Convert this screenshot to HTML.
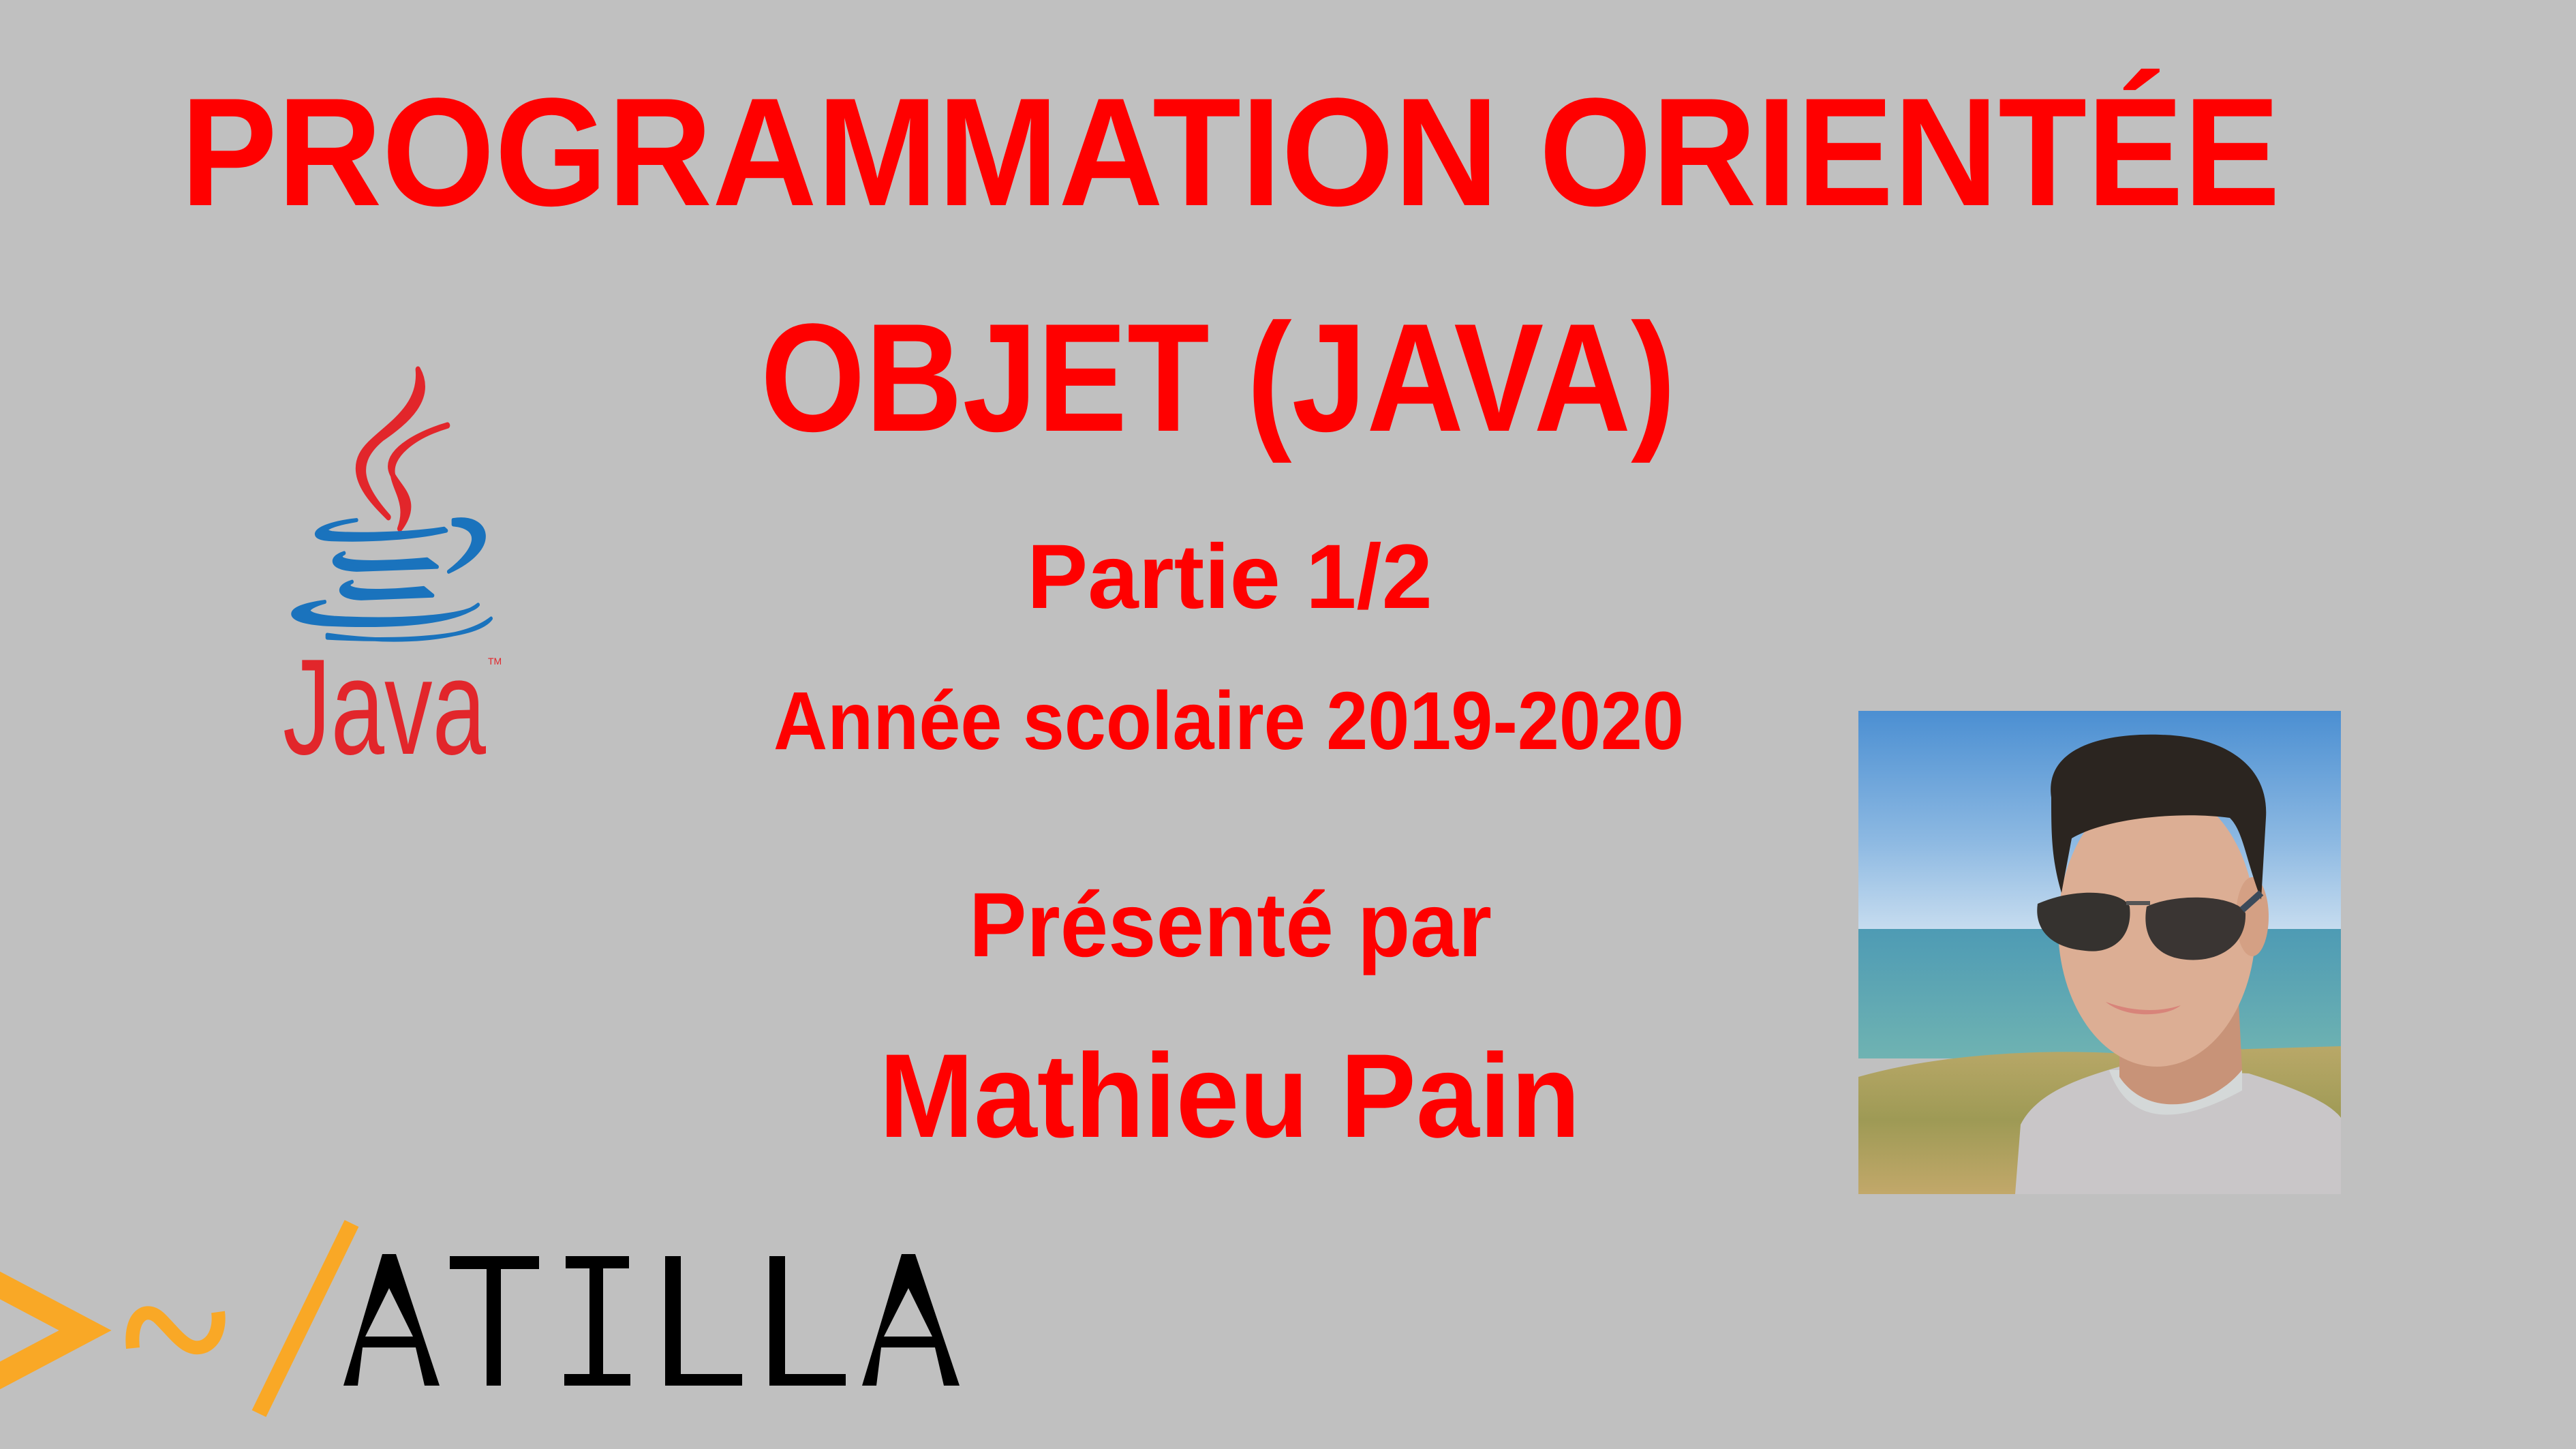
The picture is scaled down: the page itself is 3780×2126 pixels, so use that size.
<!DOCTYPE html>
<html><head><meta charset="utf-8"><style>
html,body{margin:0;padding:0;background:#c0c0c0;}
svg{display:block}
</style></head><body>
<svg width="3780" height="2126" viewBox="0 0 3780 2126" xmlns="http://www.w3.org/2000/svg">
<rect width="3780" height="2126" fill="#c0c0c0"/>
<g font-family="Liberation Sans, sans-serif" font-weight="bold" fill="#ff0000">
<text x="265" y="301" font-size="226" textLength="3081" lengthAdjust="spacingAndGlyphs">PROGRAMMATION ORIENTÉE</text>
<text x="1116" y="632" font-size="226" textLength="1343" lengthAdjust="spacingAndGlyphs">OBJET (JAVA)</text>
<text x="1507" y="892" font-size="134" textLength="595" lengthAdjust="spacingAndGlyphs">Partie 1/2</text>
<text x="1135" y="1099" font-size="121" textLength="1336" lengthAdjust="spacingAndGlyphs">Année scolaire 2019-2020</text>
<text x="1422" y="1403" font-size="134" textLength="767" lengthAdjust="spacingAndGlyphs">Présenté par</text>
<text x="1290" y="1668" font-size="175" textLength="1029" lengthAdjust="spacingAndGlyphs">Mathieu Pain</text>
</g>
<!-- Java logo -->
<g transform="translate(380,500) scale(0.3333,0.4209)">
<g fill="#e2262b" stroke="#e2262b" stroke-width="22" stroke-linejoin="round">
<path d="M700,100 C770,200 650,280 540,340 C420,420 440,500 570,615 C500,560 400,480 450,400 C500,320 720,260 700,100 Z"/>
<path d="M830,295 C720,320 560,380 580,450 C600,510 720,550 620,655 C660,570 600,520 590,470 C570,400 680,330 830,295 Z"/>
</g>
<g fill="#1a73bd" stroke="#1a73bd" stroke-width="14" stroke-linejoin="round">
<path d="M430,625 C250,640 190,690 330,692 C500,697 700,685 825,662 L815,655 C700,670 450,680 320,670 C260,660 320,640 430,625 Z"/>
<path d="M855,625 C1010,605 1070,720 835,805 C960,730 990,650 855,640 Z"/>
<path d="M375,740 C300,760 320,795 430,798 L785,788 L740,762 C600,772 420,778 370,762 C355,755 360,746 375,740 Z"/>
<path d="M410,840 C330,860 350,895 450,898 L765,888 L725,862 C600,872 450,878 405,862 C390,855 395,846 410,840 Z"/>
<path d="M290,910 C100,930 100,978 300,988 C600,998 860,985 965,920 C920,965 600,978 330,966 C180,956 200,930 290,910 Z"/>
<path d="M300,1025 C600,1058 900,1045 1022,968 C960,1035 650,1050 300,1035 Z"/>
</g>
</g>
<text x="415" y="1106" font-family="Liberation Sans, sans-serif" font-size="200" fill="#e2262b" textLength="298" lengthAdjust="spacingAndGlyphs">Java</text>
<text x="716" y="975" font-family="Liberation Sans, sans-serif" font-size="14" fill="#e2262b">TM</text>
<!-- Photo -->
<defs>
<linearGradient id="sky" x1="0" y1="0" x2="0" y2="1"><stop offset="0" stop-color="#4b8fd2"/><stop offset="0.6" stop-color="#8db9e2"/><stop offset="1" stop-color="#c6dcef"/></linearGradient>
<linearGradient id="sea" x1="0" y1="0" x2="0" y2="1"><stop offset="0" stop-color="#4e9bb4"/><stop offset="1" stop-color="#6fb3b2"/></linearGradient>
<linearGradient id="grass" x1="0" y1="0" x2="0" y2="1"><stop offset="0" stop-color="#b9a868"/><stop offset="0.5" stop-color="#9e9a55"/><stop offset="1" stop-color="#c2a86a"/></linearGradient>
<clipPath id="pc"><rect x="2727" y="1043" width="708" height="709"/></clipPath>
</defs>
<g clip-path="url(#pc)">
<rect x="2727" y="1043" width="708" height="320" fill="url(#sky)"/>
<rect x="2727" y="1363" width="708" height="190" fill="url(#sea)"/>
<path d="M2727,1580 C2850,1545 3000,1540 3100,1545 L3435,1535 L3435,1752 L2727,1752 Z" fill="url(#grass)"/>
<path d="M2957,1752 L2965,1650 C2990,1600 3060,1580 3110,1565 L3300,1575 C3380,1600 3420,1620 3435,1640 L3435,1752 Z" fill="#c9c6c8"/>
<path d="M3095,1570 C3120,1640 3180,1660 3290,1600 L3290,1570 Z" fill="#d4d8d8"/>
<path d="M3110,1480 L3110,1580 C3150,1640 3240,1630 3290,1570 L3285,1470 Z" fill="#c89378"/>
<ellipse cx="3165" cy="1360" rx="145" ry="205" fill="#dcae94"/>
<ellipse cx="3305" cy="1345" rx="24" ry="58" fill="#d4a084"/>
<path d="M3010,1170 C3000,1100 3080,1075 3170,1078 C3260,1080 3330,1120 3325,1200 L3318,1320 C3295,1260 3292,1220 3272,1200 C3200,1190 3090,1200 3040,1230 L3025,1310 C3010,1260 3010,1220 3010,1170 Z" fill="#2b2520"/>
<path d="M2990,1326 C3050,1300 3115,1308 3125,1330 C3130,1375 3100,1400 3060,1395 C3005,1390 2985,1360 2990,1326 Z" fill="#35322f"/>
<path d="M3150,1330 C3200,1308 3285,1315 3295,1340 C3297,1390 3250,1415 3200,1407 C3158,1400 3143,1368 3150,1330 Z" fill="#3a3533"/>
<rect x="3120" y="1322" width="35" height="6" fill="#555"/>
<path d="M3290,1335 L3318,1310" stroke="#3b4a5a" stroke-width="10"/>
<path d="M3090,1470 C3130,1485 3170,1485 3200,1475 C3180,1492 3120,1495 3090,1470 Z" fill="#d8847a"/>
</g>
<!-- ATILLA logo -->
<g fill="none" stroke="#f9a826" stroke-linecap="butt">
<path d="M-15,1878 L125,1952 L-15,2026" stroke-width="36" stroke-linejoin="miter"/>
<path d="M195,1978 C190,1930 215,1915 235,1935 C260,1960 275,1985 300,1975 C320,1965 322,1940 320,1925" stroke-width="20"/>
<path d="M516,1795 L380,2074" stroke-width="23"/>
</g>
<g fill="#000">
<path d="M561,1840 L581,1840 L645,2033 L623,2033 L610,1977 L532,1977 L525,2033 L504,2033 Z M571,1890 L536,1961 L606,1961 Z" fill-rule="evenodd"/>
<rect x="660" y="1843" width="131" height="19"/><rect x="714" y="1843" width="21" height="190"/>
<rect x="830" y="1843" width="93" height="18"/><rect x="865" y="1843" width="20" height="190"/><rect x="828" y="2016" width="97" height="17"/>
<rect x="976" y="1843" width="23" height="190"/><rect x="976" y="2016" width="113" height="17"/>
<rect x="1129" y="1843" width="23" height="190"/><rect x="1129" y="2016" width="112" height="17"/>
<path d="M1323,1840 L1343,1840 L1408,2033 L1385,2033 L1372,1977 L1293,1977 L1286,2033 L1265,2033 Z M1333,1890 L1297,1961 L1368,1961 Z" fill-rule="evenodd"/>
</g>
</svg>
</body></html>
